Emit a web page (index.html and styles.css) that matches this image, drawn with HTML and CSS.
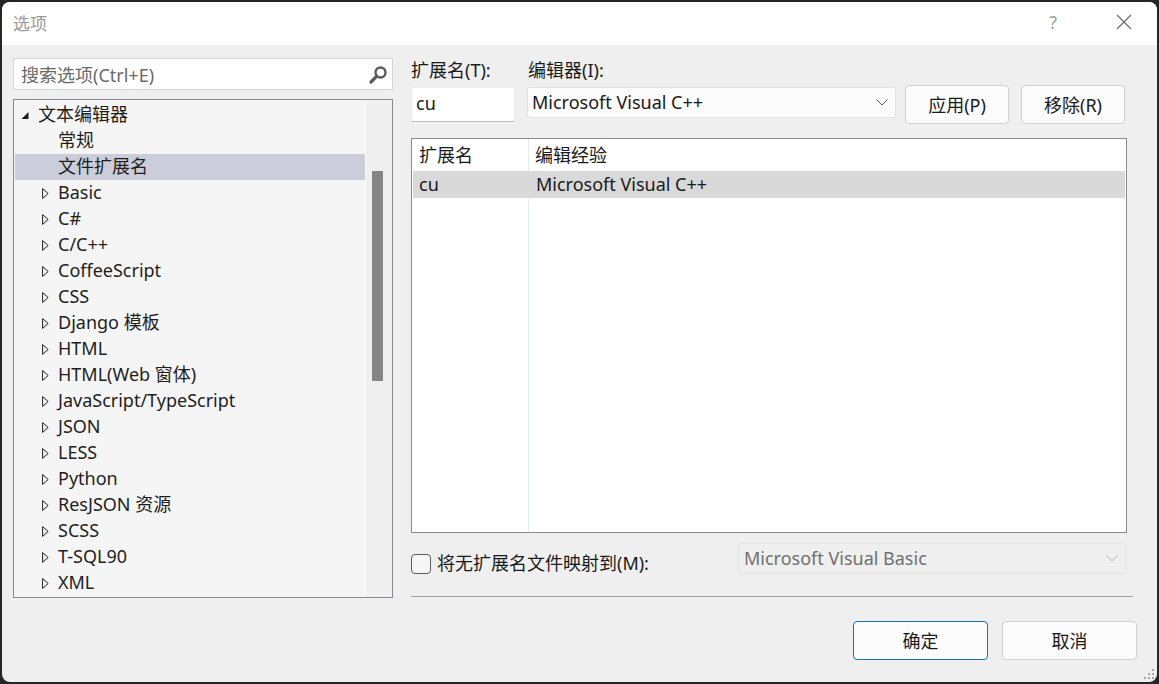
FILE: index.html
```html
<!DOCTYPE html>
<html lang="zh-CN">
<head>
<meta charset="utf-8">
<title>选项</title>
<link rel="stylesheet" href="styles.css">
</head>
<body>
<div class="window">
  <div class="titlebar">
    <span class="title">选项</span>
    <div class="tb-controls">
      <span class="help">?</span>
      <svg class="close" width="16" height="16" viewBox="0 0 16 16"><path d="M1 1L15 15M15 1L1 15" stroke="#6a6a6a" stroke-width="1.2" fill="none"/></svg>
    </div>
  </div>
  <div class="content">
    <div class="left">
      <div class="search">
        <span class="placeholder">搜索选项(Ctrl+E)</span>
        <svg class="search-icon" width="20" height="20" viewBox="0 0 20 20"><circle cx="12.5" cy="7.5" r="5" stroke="#5a5a5a" stroke-width="2.4" fill="none"/><path d="M8.8 11.2L3 17" stroke="#5a5a5a" stroke-width="3.2" stroke-linecap="round"/></svg>
      </div>
      <div class="tree">
        <div class="tree-rows">
          <div class="row lvl0"><span class="exp"><svg width="9" height="9" viewBox="0 0 9 9"><polygon points="7.5,1 7.5,8 0.5,8" fill="#1e1e1e"/></svg></span><span class="txt">文本编辑器</span></div>
          <div class="row lvl1"><span class="exp"></span><span class="txt">常规</span></div>
          <div class="row lvl1 selected"><span class="exp"></span><span class="txt">文件扩展名</span></div>
          <div class="row lvl1"><span class="exp"><svg class="tri" width="7" height="11" viewBox="0 0 7 11"><polygon points="0.6,0.6 6.2,5.5 0.6,10.4" fill="none" stroke="#1e1e1e" stroke-width="1"/></svg></span><span class="txt">Basic</span></div>
          <div class="row lvl1"><span class="exp"><svg class="tri" width="7" height="11" viewBox="0 0 7 11"><polygon points="0.6,0.6 6.2,5.5 0.6,10.4" fill="none" stroke="#1e1e1e" stroke-width="1"/></svg></span><span class="txt">C#</span></div>
          <div class="row lvl1"><span class="exp"><svg class="tri" width="7" height="11" viewBox="0 0 7 11"><polygon points="0.6,0.6 6.2,5.5 0.6,10.4" fill="none" stroke="#1e1e1e" stroke-width="1"/></svg></span><span class="txt">C/C++</span></div>
          <div class="row lvl1"><span class="exp"><svg class="tri" width="7" height="11" viewBox="0 0 7 11"><polygon points="0.6,0.6 6.2,5.5 0.6,10.4" fill="none" stroke="#1e1e1e" stroke-width="1"/></svg></span><span class="txt">CoffeeScript</span></div>
          <div class="row lvl1"><span class="exp"><svg class="tri" width="7" height="11" viewBox="0 0 7 11"><polygon points="0.6,0.6 6.2,5.5 0.6,10.4" fill="none" stroke="#1e1e1e" stroke-width="1"/></svg></span><span class="txt">CSS</span></div>
          <div class="row lvl1"><span class="exp"><svg class="tri" width="7" height="11" viewBox="0 0 7 11"><polygon points="0.6,0.6 6.2,5.5 0.6,10.4" fill="none" stroke="#1e1e1e" stroke-width="1"/></svg></span><span class="txt">Django 模板</span></div>
          <div class="row lvl1"><span class="exp"><svg class="tri" width="7" height="11" viewBox="0 0 7 11"><polygon points="0.6,0.6 6.2,5.5 0.6,10.4" fill="none" stroke="#1e1e1e" stroke-width="1"/></svg></span><span class="txt">HTML</span></div>
          <div class="row lvl1"><span class="exp"><svg class="tri" width="7" height="11" viewBox="0 0 7 11"><polygon points="0.6,0.6 6.2,5.5 0.6,10.4" fill="none" stroke="#1e1e1e" stroke-width="1"/></svg></span><span class="txt">HTML(Web 窗体)</span></div>
          <div class="row lvl1"><span class="exp"><svg class="tri" width="7" height="11" viewBox="0 0 7 11"><polygon points="0.6,0.6 6.2,5.5 0.6,10.4" fill="none" stroke="#1e1e1e" stroke-width="1"/></svg></span><span class="txt">JavaScript/TypeScript</span></div>
          <div class="row lvl1"><span class="exp"><svg class="tri" width="7" height="11" viewBox="0 0 7 11"><polygon points="0.6,0.6 6.2,5.5 0.6,10.4" fill="none" stroke="#1e1e1e" stroke-width="1"/></svg></span><span class="txt">JSON</span></div>
          <div class="row lvl1"><span class="exp"><svg class="tri" width="7" height="11" viewBox="0 0 7 11"><polygon points="0.6,0.6 6.2,5.5 0.6,10.4" fill="none" stroke="#1e1e1e" stroke-width="1"/></svg></span><span class="txt">LESS</span></div>
          <div class="row lvl1"><span class="exp"><svg class="tri" width="7" height="11" viewBox="0 0 7 11"><polygon points="0.6,0.6 6.2,5.5 0.6,10.4" fill="none" stroke="#1e1e1e" stroke-width="1"/></svg></span><span class="txt">Python</span></div>
          <div class="row lvl1"><span class="exp"><svg class="tri" width="7" height="11" viewBox="0 0 7 11"><polygon points="0.6,0.6 6.2,5.5 0.6,10.4" fill="none" stroke="#1e1e1e" stroke-width="1"/></svg></span><span class="txt">ResJSON 资源</span></div>
          <div class="row lvl1"><span class="exp"><svg class="tri" width="7" height="11" viewBox="0 0 7 11"><polygon points="0.6,0.6 6.2,5.5 0.6,10.4" fill="none" stroke="#1e1e1e" stroke-width="1"/></svg></span><span class="txt">SCSS</span></div>
          <div class="row lvl1"><span class="exp"><svg class="tri" width="7" height="11" viewBox="0 0 7 11"><polygon points="0.6,0.6 6.2,5.5 0.6,10.4" fill="none" stroke="#1e1e1e" stroke-width="1"/></svg></span><span class="txt">T-SQL90</span></div>
          <div class="row lvl1"><span class="exp"><svg class="tri" width="7" height="11" viewBox="0 0 7 11"><polygon points="0.6,0.6 6.2,5.5 0.6,10.4" fill="none" stroke="#1e1e1e" stroke-width="1"/></svg></span><span class="txt">XML</span></div>
        </div>
        <div class="scrollbar"><div class="thumb"></div></div>
      </div>
    </div>

    <div class="right">
      <div class="labels">
        <span class="lbl lbl-ext">扩展名(T):</span>
        <span class="lbl">编辑器(I):</span>
      </div>
      <div class="controls">
        <div class="textbox">cu</div>
        <div class="combo">
          <span>Microsoft Visual C++</span>
          <svg width="12" height="7" viewBox="0 0 12 7"><path d="M0.5 0.5L6 6L11.5 0.5" stroke="#5a5a5a" stroke-width="1" fill="none"/></svg>
        </div>
        <button class="btn btn-apply">应用(P)</button>
        <button class="btn">移除(R)</button>
      </div>
      <div class="list">
        <div class="lrow lhead"><span class="c1">扩展名</span><span class="c2">编辑经验</span></div>
        <div class="lrow lsel"><span class="c1">cu</span><span class="c2">Microsoft Visual C++</span></div>
      </div>
      <div class="maprow">
        <label class="check"><span class="box"></span><span>将无扩展名文件映射到(M):</span></label>
        <div class="combo combo-disabled">
          <span>Microsoft Visual Basic</span>
          <svg width="12" height="7" viewBox="0 0 12 7"><path d="M0.5 0.5L6 6L11.5 0.5" stroke="#b5b5b5" stroke-width="1" fill="none"/></svg>
        </div>
      </div>
      <div class="sep"></div>
      <div class="footer">
        <button class="btn btn-big btn-default">确定</button>
        <button class="btn btn-big">取消</button>
      </div>
    </div>
  </div>
  <svg class="grip" width="12" height="12" viewBox="0 0 12 12"><g fill="#a8a8a8"><rect x="9" y="1" width="2" height="2"/><rect x="5" y="5" width="2" height="2"/><rect x="9" y="5" width="2" height="2"/><rect x="1" y="9" width="2" height="2"/><rect x="5" y="9" width="2" height="2"/><rect x="9" y="9" width="2" height="2"/></g></svg>
</div>
</body>
</html>
```

FILE: styles.css
```css
* { box-sizing: border-box; }
html, body { margin: 0; padding: 0; }
body {
  background: #262626;
  width: 1159px;
  height: 684px;
  overflow: hidden;
  font-family: "Noto Sans", "Noto Sans CJK SC", sans-serif;
  font-size: 18px;
  color: #1a1a1a;
}
.window {
  position: relative;
  margin: 2px 0 0 2px;
  width: 1155px;
  height: 680px;
  background: #efefef;
  border-radius: 8px;
  overflow: hidden;
}
.titlebar {
  height: 43px;
  background: #ffffff;
  display: flex;
  align-items: center;
  justify-content: space-between;
  padding-left: 11px;
}
.title {
  font-size: 17px;
  color: #9a9a9a;
  margin-top: -2px;
}
.tb-controls {
  display: flex;
  align-items: center;
  padding-right: 25px;
}
.help {
  font-size: 18px;
  color: #a0a0a0;
  margin-right: 59px;
  margin-top: -4px;
}
.close { margin-top: -4px; }

.content {
  display: flex;
  padding: 13px 0 0 11px;
}
.left {
  width: 380px;
  display: flex;
  flex-direction: column;
  gap: 9px;
}
.search {
  height: 32px;
  background: #ffffff;
  border: 1px solid #d3d3e3;
  display: flex;
  align-items: center;
  justify-content: space-between;
  padding: 0 4px 0 7px;
}
.placeholder { color: #6a6a6a; font-size: 18px; }
.search-icon { margin-top: 1px; }

.tree {
  height: 499px;
  border: 1px solid #8a8a92;
  background: #f5f5f5;
  display: flex;
}
.tree-rows {
  flex: 1;
  padding: 2px 0 0 1px;
}
.row {
  height: 26px;
  display: flex;
  align-items: center;
  white-space: nowrap;
  color: #1e1e1e;
}
.row.lvl0 { padding-left: 6px; }
.row.lvl1 { padding-left: 27px; }
.row.selected { background: #cbcdda; }
.exp {
  width: 16px;
  height: 26px;
  display: flex;
  align-items: center;
  flex-shrink: 0;
}
.row.lvl0 .exp { width: 17px; padding-top: 1px; }
.txt { line-height: 26px; margin-top: -2px; }
.scrollbar {
  width: 27px;
  background: #efefef;
  border-left: 1px solid #fbfbfb;
  padding-left: 6px;
  padding-top: 71px;
}
.thumb {
  width: 11px;
  height: 210px;
  background: #858585;
}

.right {
  margin-left: 18px;
  width: 726px;
  display: flex;
  flex-direction: column;
}
.labels {
  display: flex;
  height: 24px;
  line-height: 24px;
}
.lbl-ext { width: 117px; }
.controls {
  display: flex;
  align-items: flex-start;
  margin-top: 3px;
}
.textbox {
  width: 104px;
  height: 35px;
  margin-top: 2px;
  background: #ffffff;
  border: 1px solid #ececec;
  border-bottom-color: #bdbdbd;
  padding-left: 4px;
  line-height: 31px;
}
.combo {
  width: 369px;
  height: 31px;
  margin-top: 2px;
  margin-left: 12px;
  background: #fbfbfb;
  border: 1px solid #e2e2e2;
  border-radius: 2px;
  display: flex;
  align-items: center;
  justify-content: space-between;
  padding: 0 7px 0 4px;
}
.combo span { margin-top: -2px; }
.btn {
  font-family: inherit;
  font-size: 18px;
  color: #1a1a1a;
  background: #fbfbfb;
  border: 1px solid #d0d0d0;
  border-radius: 4px;
  height: 39px;
  width: 104px;
  padding: 0 0 2px 0;
  margin: 0;
}
.btn-apply { margin-left: 9px; margin-right: 12px; }

.list {
  margin-top: 14px;
  width: 716px;
  height: 395px;
  border: 1px solid #8a8a92;
  background-color: #ffffff;
  background-image: linear-gradient(to right, transparent 116px, #e4ebf5 116px, #e4ebf5 117px, transparent 117px);
}
.lrow {
  display: flex;
  align-items: center;
  white-space: nowrap;
}
.lhead { height: 32px; }
.lsel {
  height: 27px;
  background: #d9d9d9;
  margin: 0 1px;
}
.lhead .c1 { width: 116px; padding-left: 7px; margin-top: -2px; }
.lhead .c2 { padding-left: 7px; margin-top: -2px; }
.lsel .c1 { width: 115px; padding-left: 6px; margin-top: -2px; }
.lsel .c2 { padding-left: 8px; margin-top: -2px; }

.maprow {
  display: flex;
  align-items: flex-start;
  height: 31px;
  margin-top: 10px;
}
.check {
  display: flex;
  align-items: center;
  gap: 6px;
  height: 31px;
  padding-top: 11px;
  width: 327px;
}
.check span:last-child { margin-top: -4px; }
.box {
  width: 20px;
  height: 20px;
  border: 1px solid #5c5c5c;
  border-radius: 4px;
  background: #f6f6f6;
  margin-top: 0;
}
.combo-disabled {
  width: 388px;
  margin: 0;
  background: #efefef;
  border-color: #e3e3e3;
  color: #707070;
  padding-left: 5px;
}
.sep {
  margin-top: 22px;
  width: 722px;
  height: 1px;
  background: #a3a3a3;
}
.footer {
  display: flex;
  justify-content: flex-end;
  gap: 14px;
  margin-top: 24px;
}
.btn-big { width: 135px; height: 39px; }
.btn-default { border-color: #1a6fc2; }
.grip {
  position: absolute;
  right: 2px;
  bottom: 2px;
}
```
